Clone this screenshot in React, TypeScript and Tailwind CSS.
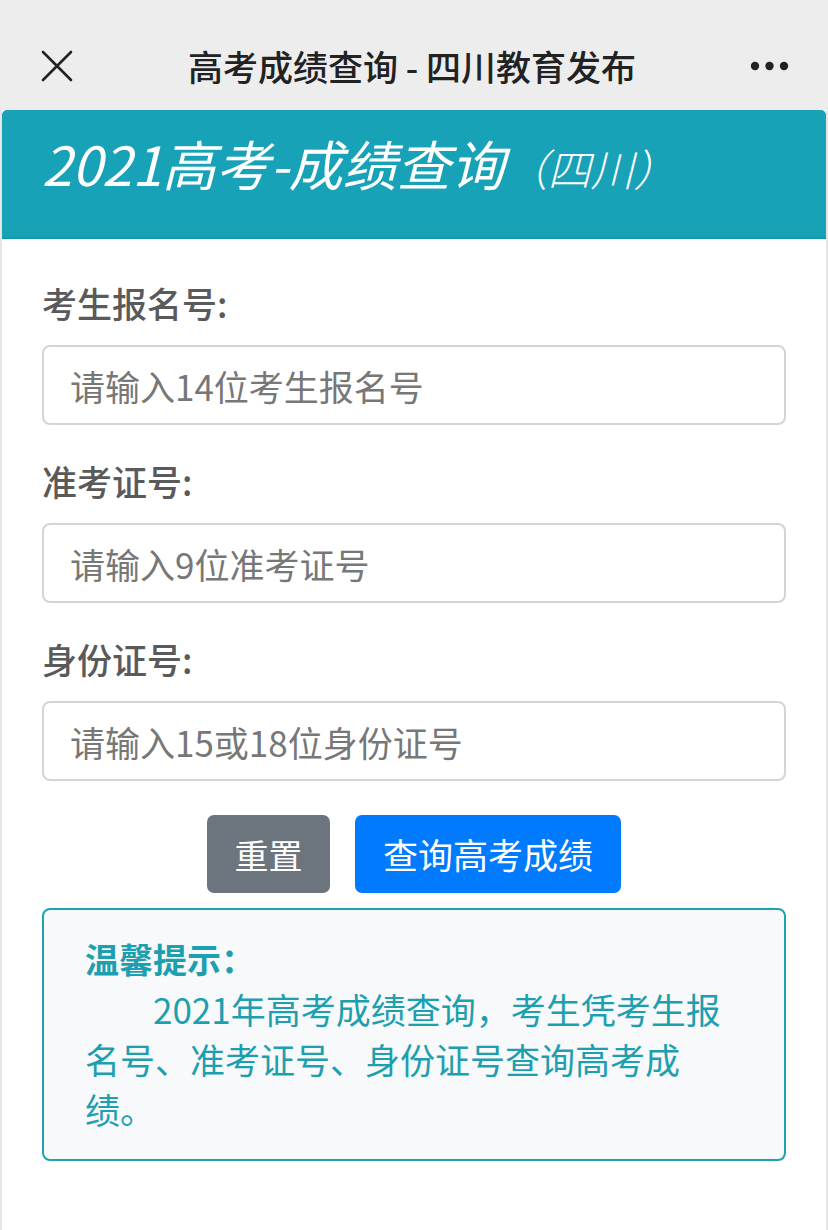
import { useState } from "react";

const FONT = { fontFamily: '"Noto Sans CJK SC", "Noto Sans", sans-serif' };

function TopBar() {
  return (
    <div className="h-[110px] bg-[#ededed] flex items-center justify-between px-[40px] pt-[22px]">
      <svg width="34" height="34" viewBox="0 0 34 34" className="text-[#222]">
        <path d="M3 3 L31 31 M31 3 L3 31" stroke="currentColor" strokeWidth="2.6" strokeLinecap="round" fill="none" />
      </svg>
      <h1 className="text-[35px] font-medium text-[#222] leading-none -mt-[2px]">高考成绩查询 - 四川教育发布</h1>
      <svg width="40" height="12" viewBox="0 0 40 12" className="text-[#222] -mr-[2px]">
        <circle cx="5" cy="6" r="4.2" fill="currentColor" />
        <circle cx="19.5" cy="6" r="4.2" fill="currentColor" />
        <circle cx="34" cy="6" r="4.2" fill="currentColor" />
      </svg>
    </div>
  );
}

function Field({ label, placeholder }: { label: string; placeholder: string }) {
  const [value, setValue] = useState("");
  return (
    <div>
      <label className="block text-[35px] leading-[46px] font-medium text-[#5a5a5a]">{label}</label>
      <input
        value={value}
        onChange={(e) => setValue(e.target.value)}
        placeholder={placeholder}
        className="mt-[19px] block w-full h-[80px] border-2 border-[#d4d4d4] rounded-[8px] px-[26px] text-[35px] text-[#333] placeholder:text-[#777] bg-white outline-none"
      />
    </div>
  );
}

export default function App() {
  return (
    <div className="min-h-screen bg-[#e6e6e6]" style={FONT}>
      <TopBar />
      <div className="mx-[2px] min-h-[1120px] bg-white">
        {/* Header */}
        <div className="h-[129px] bg-[#17a2b8] rounded-t-[5px] border-b-2 border-[#1597aa] pl-[40px] pt-[20px]">
          <h2 className="text-white italic leading-[66px] whitespace-nowrap">
            <span className="text-[54px]">2021高考-成绩查询</span>
            <span className="text-[43px] font-light">（四川）</span>
          </h2>
        </div>

        {/* Form */}
        <div className="px-[40px] pt-[41px]">
          <div className="flex flex-col gap-[33px]">
            <Field label="考生报名号:" placeholder="请输入14位考生报名号" />
            <Field label="准考证号:" placeholder="请输入9位准考证号" />
            <Field label="身份证号:" placeholder="请输入15或18位身份证号" />
          </div>

          <div className="flex justify-center gap-[25px] mt-[34px]">
            <button className="w-[123px] h-[78px] rounded-[7px] bg-[#6c757d] text-white text-[34px]">重置</button>
            <button className="w-[266px] h-[78px] rounded-[7px] bg-[#007bff] text-white text-[35px]">查询高考成绩</button>
          </div>

          {/* Tip */}
          <div className="mt-[15px] border-2 border-[#1ea3b3] rounded-[8px] bg-[#f8f9fa] pl-[41px] pr-[45px] pt-[24px] pb-[25px] text-[#1e9faf]">
            <p className="text-[34px] leading-[50px] font-bold">温馨提示：</p>
            <p className="text-[35px] leading-[50px] indent-[68px]">
              2021年高考成绩查询，考生凭考生报名号、准考证号、身份证号查询高考成绩。
            </p>
          </div>
        </div>
      </div>
    </div>
  );
}
